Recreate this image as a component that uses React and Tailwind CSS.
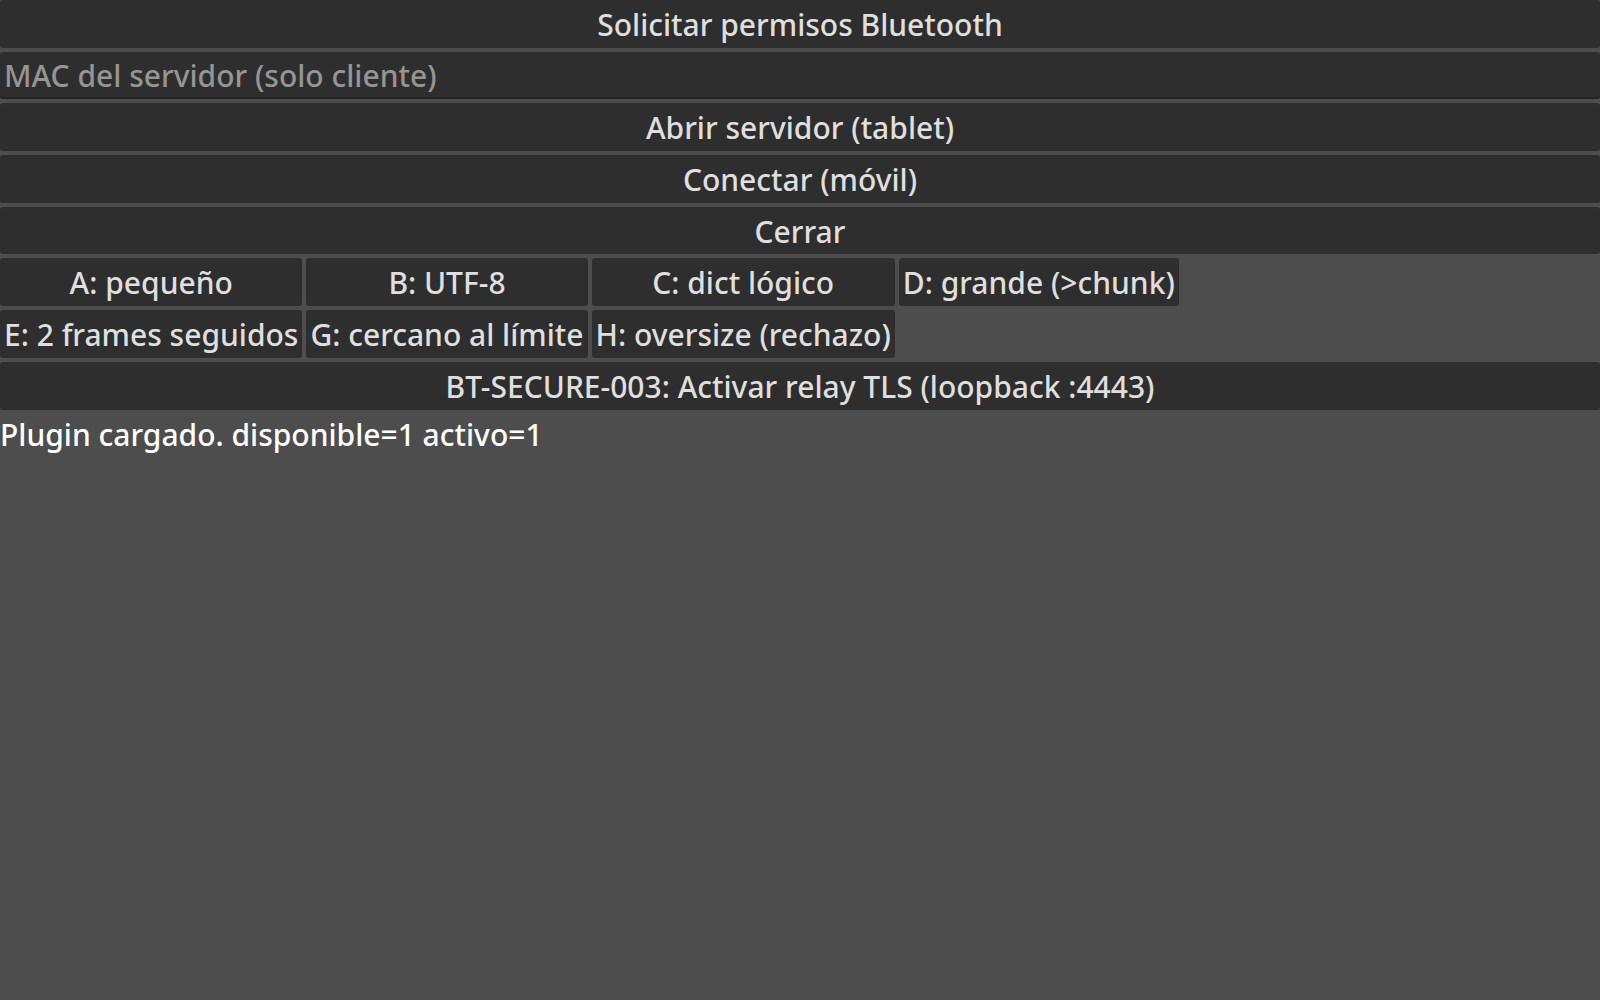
import React from 'react';

const rowBtn =
  'h-[47.7px] w-full rounded-[3px] bg-[#2e2e2e] text-[#dfdfdf] text-[30px] leading-none pt-[2px] flex items-center justify-center';

const tests = [
  'A: pequeño',
  'B: UTF-8',
  'C: dict lógico',
  'D: grande (>chunk)',
  'E: 2 frames seguidos',
  'G: cercano al límite',
  'H: oversize (rechazo)',
];

export default function App() {
  return (
    <div
      className="min-h-screen w-full bg-[#4d4d4d] flex flex-col gap-1 font-medium"
      style={{ fontFamily: '"Noto Sans", "Open Sans", sans-serif' }}
    >
      <button className={rowBtn}>Solicitar permisos Bluetooth</button>
      <input
        className="h-[47.7px] w-full rounded-[3px] bg-[#2e2e2e] border-b-2 border-[#232323] px-1 pt-[2px] text-[30px] text-[#dfdfdf] placeholder:text-[#959595] outline-none"
        placeholder="MAC del servidor (solo cliente)"
      />
      <button className={rowBtn}>Abrir servidor (tablet)</button>
      <button className={rowBtn}>Conectar (móvil)</button>
      <button className={rowBtn}>Cerrar</button>

      <div className="grid grid-cols-[auto_auto_auto_auto] gap-1 w-fit">
        {tests.map((t) => (
          <button
            key={t}
            className="h-[47.7px] rounded-[3px] bg-[#2e2e2e] text-[#dfdfdf] text-[30px] leading-none px-1 pt-[2px] flex items-center justify-center whitespace-nowrap"
          >
            {t}
          </button>
        ))}
      </div>

      <button className={rowBtn}>BT-SECURE-003: Activar relay TLS (loopback :4443)</button>

      <p className="text-[30px] text-white leading-[38px] pt-[2px]">
        Plugin cargado. disponible=1 activo=1
      </p>
    </div>
  );
}
